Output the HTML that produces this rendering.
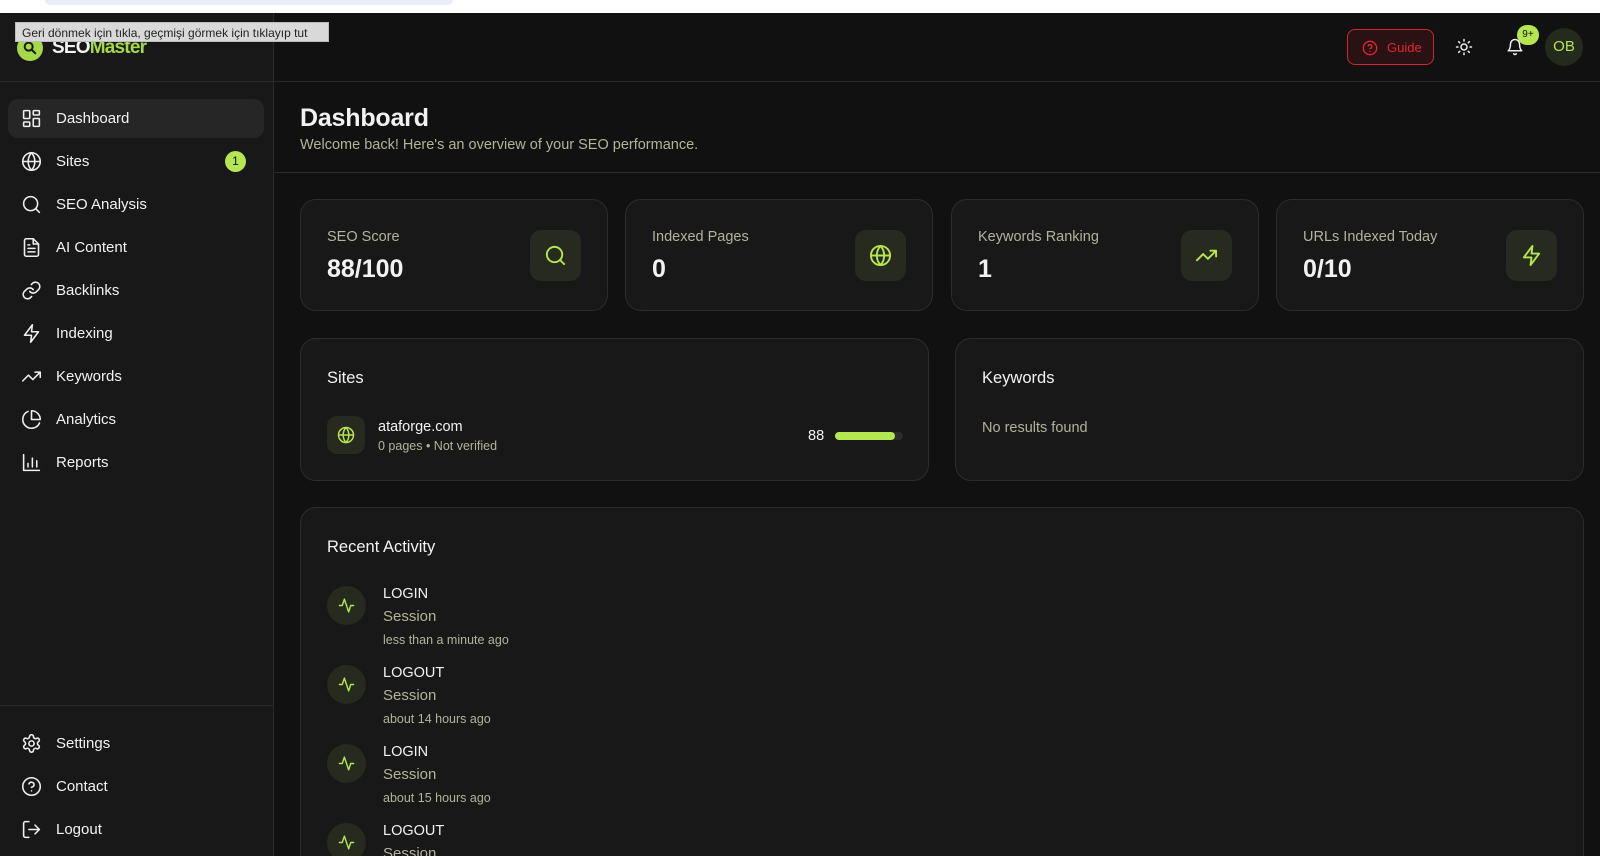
<!DOCTYPE html>
<html style="overflow:hidden;height:856px"><head><meta charset="utf-8">
<style>
*{box-sizing:border-box;margin:0;padding:0}
html,body{overflow:hidden}
body{width:1600px;height:856px;background:#111;font-family:"Liberation Sans",sans-serif;color:#f2f2f2;position:relative}
.top{position:absolute;left:0;top:0;width:1600px;height:13px;background:#fff}
.top .bar{position:absolute;left:45px;top:0;width:408px;height:5px;background:#e9edf6;border-radius:0 0 6px 6px}
.side{position:absolute;left:0;top:13px;width:274px;height:843px;background:#181818;border-right:1px solid #2a2a2a}
.side .hdr{height:69px;border-bottom:1px solid #2a2a2a;position:relative}
.logo{position:absolute;left:17px;top:22px;width:26px;height:26px;border-radius:50%;background:#a6d94a}
.logotxt{position:absolute;left:52px;top:24px;font-size:19px;font-weight:bold;letter-spacing:-0.8px}
.logotxt span{color:#a6d94a}
.nav{position:absolute;left:8px;width:256px;height:39px;border-radius:10px;font-size:15px}
.nav.act{background:#262626}
.nav svg{position:absolute;left:13px;top:9px;width:21px;height:21px;fill:none;stroke:#eee;stroke-width:1.8;stroke-linecap:round;stroke-linejoin:round}
.nav .t{position:absolute;left:48px;top:11px}
.badge{position:absolute;right:18px;top:9px;width:21px;height:21px;border-radius:50%;background:#b5e550;color:#111;font-size:12px;text-align:center;line-height:21px}
.sdiv{position:absolute;left:0;top:705px;width:273px;border-top:1px solid #2a2a2a}
.tip{position:absolute;left:15px;top:22px;width:314px;height:20px;background:#d9d9d9;color:#222;font-size:12px;line-height:20px;padding-left:6px;border:1px solid #bbb}
.mhdr{position:absolute;left:274px;top:13px;width:1326px;height:69px;border-bottom:1px solid #2a2a2a}
.guide{position:absolute;left:1347px;top:29px;width:87px;height:36px;border:1px solid #d0262f;border-radius:8px;background:#2a1214;color:#e3262f;font-size:13px}
.guide svg{position:absolute;left:14px;top:10px}
.guide span{position:absolute;left:39px;top:10px}
.nbadge{position:absolute;left:1517px;top:25px;width:22px;height:20px;border-radius:10px;background:#b5e550;color:#111;font-size:10px;text-align:center;line-height:20px}
.av{position:absolute;left:1545px;top:28px;width:38px;height:38px;border-radius:50%;background:#242a1c;color:#b5e550;font-size:15px;text-align:center;line-height:38px}
h1{position:absolute;left:300px;top:104px;font-size:25px;font-weight:bold;letter-spacing:-0.2px}
.sub{position:absolute;left:300px;top:137px;font-size:14.5px;color:#b3b39c}
.cdiv{position:absolute;left:274px;top:172px;width:1326px;border-top:1px solid #2a2a2a}
.card{position:absolute;background:#181818;border:1px solid #2c2c2c;border-radius:16px}
.lbl{position:absolute;left:26px;top:29px;font-size:14.5px;color:#b3b39c}
.val{position:absolute;left:26px;top:55px;font-size:25px;font-weight:bold}
.ib{position:absolute;right:26px;top:30px;width:51px;height:51px;border-radius:11px;background:#272b1f}
.ib svg{position:absolute;left:14px;top:14px;width:23px;height:23px;fill:none;stroke:#b5e550;stroke-width:2;stroke-linecap:round;stroke-linejoin:round}
.ct{position:absolute;left:26px;font-size:16.5px}
.ai{position:absolute;left:26px;width:39px;height:39px;border-radius:50%;background:#262a1f}
.ai svg{position:absolute;left:11px;top:11px;width:17px;height:17px;fill:none;stroke:#b5e550;stroke-width:2;stroke-linecap:round;stroke-linejoin:round}
.an{position:absolute;left:82px;font-size:14.5px}
.as{position:absolute;left:82px;font-size:15px;color:#b3b39c}
.at{position:absolute;left:82px;font-size:12.5px;color:#b3b39c}
</style></head><body>
<div class="top"><div class="bar"></div></div>
<div class="side">
 <div class="hdr"><div class="logo"><svg style="position:absolute;left:5px;top:5px" width="16" height="16" viewBox="0 0 24 24" fill="none" stroke="#1a1a1a" stroke-width="3" stroke-linecap="round"><circle cx="10" cy="10" r="6"/><path d="M15 15l5 5"/></svg></div><div class="logotxt">SEO<span>Master</span></div></div>
</div>
<div class="tip">Geri dönmek için tıkla, geçmişi görmek için tıklayıp tut</div>

<div class="nav act" style="top:99px"><svg viewBox="0 0 24 24"><rect x="3" y="3" width="7" height="9" rx="1"/><rect x="14" y="3" width="7" height="5" rx="1"/><rect x="14" y="12" width="7" height="9" rx="1"/><rect x="3" y="16" width="7" height="5" rx="1"/></svg><span class="t">Dashboard</span></div>
<div class="nav" style="top:142px"><svg viewBox="0 0 24 24"><circle cx="12" cy="12" r="10"/><path d="M2 12h20M12 2a15 15 0 0 1 0 20a15 15 0 0 1 0-20"/></svg><span class="t">Sites</span><span class="badge">1</span></div>
<div class="nav" style="top:185px"><svg viewBox="0 0 24 24"><circle cx="11" cy="11" r="8"/><path d="M21 21l-4.3-4.3"/></svg><span class="t">SEO Analysis</span></div>
<div class="nav" style="top:228px"><svg viewBox="0 0 24 24"><path d="M14 2H6a2 2 0 0 0-2 2v16a2 2 0 0 0 2 2h12a2 2 0 0 0 2-2V8z"/><path d="M14 2v6h6M16 13H8M16 17H8M10 9H8"/></svg><span class="t">AI Content</span></div>
<div class="nav" style="top:271px"><svg viewBox="0 0 24 24"><path d="M10 13a5 5 0 0 0 7.5.5l3-3a5 5 0 0 0-7-7l-1.7 1.7"/><path d="M14 11a5 5 0 0 0-7.5-.5l-3 3a5 5 0 0 0 7 7l1.7-1.7"/></svg><span class="t">Backlinks</span></div>
<div class="nav" style="top:314px"><svg viewBox="0 0 24 24"><path d="M13 2L4 14h8l-1 8 9-12h-8z"/></svg><span class="t">Indexing</span></div>
<div class="nav" style="top:357px"><svg viewBox="0 0 24 24"><path d="M22 7l-8.5 8.5-5-5L2 17M16 7h6v6"/></svg><span class="t">Keywords</span></div>
<div class="nav" style="top:400px"><svg viewBox="0 0 24 24"><path d="M21.2 15.9A10 10 0 1 1 8 2.8"/><path d="M22 12A10 10 0 0 0 12 2v10z"/></svg><span class="t">Analytics</span></div>
<div class="nav" style="top:443px"><svg viewBox="0 0 24 24"><path d="M3 3v18h18M8 17v-4M13 17V7M18 17v-7"/></svg><span class="t">Reports</span></div>
<div class="sdiv"></div>
<div class="nav" style="top:724px"><svg viewBox="0 0 24 24"><circle cx="12" cy="12" r="3"/><path d="M12.2 2h-.4a2 2 0 0 0-2 2v.2a2 2 0 0 1-1 1.7l-.4.3a2 2 0 0 1-2 0l-.2-.1a2 2 0 0 0-2.7.7l-.2.4a2 2 0 0 0 .7 2.7l.2.1a2 2 0 0 1 1 1.7v.5a2 2 0 0 1-1 1.7l-.2.1a2 2 0 0 0-.7 2.7l.2.4a2 2 0 0 0 2.7.7l.2-.1a2 2 0 0 1 2 0l.4.3a2 2 0 0 1 1 1.7v.2a2 2 0 0 0 2 2h.4a2 2 0 0 0 2-2v-.2a2 2 0 0 1 1-1.7l.4-.3a2 2 0 0 1 2 0l.2.1a2 2 0 0 0 2.7-.7l.2-.4a2 2 0 0 0-.7-2.7l-.2-.1a2 2 0 0 1-1-1.7v-.5a2 2 0 0 1 1-1.7l.2-.1a2 2 0 0 0 .7-2.7l-.2-.4a2 2 0 0 0-2.7-.7l-.2.1a2 2 0 0 1-2 0l-.4-.3a2 2 0 0 1-1-1.7V4a2 2 0 0 0-2-2z"/></svg><span class="t">Settings</span></div>
<div class="nav" style="top:767px"><svg viewBox="0 0 24 24"><circle cx="12" cy="12" r="10"/><path d="M9.1 9a3 3 0 0 1 5.8 1c0 2-3 3-3 3M12 17h.01"/></svg><span class="t">Contact</span></div>
<div class="nav" style="top:810px"><svg viewBox="0 0 24 24"><path d="M9 21H5a2 2 0 0 1-2-2V5a2 2 0 0 1 2-2h4M16 17l5-5-5-5M21 12H9"/></svg><span class="t">Logout</span></div>

<div class="mhdr"></div>
<div class="guide"><svg width="16" height="16" viewBox="0 0 24 24" fill="none" stroke="#e3262f" stroke-width="2" stroke-linecap="round"><circle cx="12" cy="12" r="10"/><path d="M9.1 9a3 3 0 0 1 5.8 1c0 2-3 3-3 3M12 17h.01"/></svg><span>Guide</span></div>
<svg style="position:absolute;left:1455px;top:38px" width="18" height="18" viewBox="0 0 24 24" fill="none" stroke="#eee" stroke-width="2" stroke-linecap="round"><circle cx="12" cy="12" r="4"/><path d="M12 2v2M12 20v2M4.9 4.9l1.4 1.4M17.7 17.7l1.4 1.4M2 12h2M20 12h2M6.3 17.7l-1.4 1.4M19.1 4.9l-1.4 1.4"/></svg>
<svg style="position:absolute;left:1506px;top:38px" width="18" height="18" viewBox="0 0 24 24" fill="none" stroke="#eee" stroke-width="2" stroke-linecap="round" stroke-linejoin="round"><path d="M6 8a6 6 0 0 1 12 0c0 7 3 9 3 9H3s3-2 3-9M10.3 21a1.9 1.9 0 0 0 3.4 0"/></svg>
<div class="nbadge">9+</div>
<div class="av">OB</div>

<h1>Dashboard</h1>
<div class="sub">Welcome back! Here's an overview of your SEO performance.</div>
<div class="cdiv"></div>

<div class="card" style="left:300px;top:199px;width:308px;height:112px"><div class="lbl">SEO Score</div><div class="val">88/100</div><div class="ib"><svg viewBox="0 0 24 24"><circle cx="11" cy="11" r="8"/><path d="M21 21l-4.3-4.3"/></svg></div></div>
<div class="card" style="left:625px;top:199px;width:308px;height:112px"><div class="lbl">Indexed Pages</div><div class="val">0</div><div class="ib"><svg viewBox="0 0 24 24"><circle cx="12" cy="12" r="10"/><path d="M2 12h20M12 2a15 15 0 0 1 0 20a15 15 0 0 1 0-20"/></svg></div></div>
<div class="card" style="left:951px;top:199px;width:308px;height:112px"><div class="lbl">Keywords Ranking</div><div class="val">1</div><div class="ib"><svg viewBox="0 0 24 24"><path d="M22 7l-8.5 8.5-5-5L2 17M16 7h6v6"/></svg></div></div>
<div class="card" style="left:1276px;top:199px;width:308px;height:112px"><div class="lbl">URLs Indexed Today</div><div class="val">0/10</div><div class="ib"><svg viewBox="0 0 24 24"><path d="M13 2L4 14h8l-1 8 9-12h-8z"/></svg></div></div>

<div class="card" style="left:300px;top:338px;width:629px;height:143px">
 <div class="ct" style="top:30px">Sites</div>
 <div style="position:absolute;left:26px;top:77px;width:38px;height:38px;border-radius:10px;background:#262a1f"><svg style="position:absolute;left:10px;top:10px" width="18" height="18" viewBox="0 0 24 24" fill="none" stroke="#b5e550" stroke-width="2"><circle cx="12" cy="12" r="10"/><path d="M2 12h20M12 2a15 15 0 0 1 0 20a15 15 0 0 1 0-20"/></svg></div>
 <div style="position:absolute;left:77px;top:80px;font-size:14.5px">ataforge.com</div>
 <div style="position:absolute;left:77px;top:100px;font-size:12.5px;color:#b3b39c">0 pages • Not verified</div>
 <div style="position:absolute;left:507px;top:89px;font-size:14.5px">88</div>
 <div style="position:absolute;left:534px;top:93px;width:68px;height:8px;border-radius:4px;background:#2c2c2c"><div style="width:60px;height:8px;border-radius:4px;background:#b5e550"></div></div>
</div>
<div class="card" style="left:955px;top:338px;width:629px;height:143px">
 <div class="ct" style="top:30px">Keywords</div>
 <div style="position:absolute;left:26px;top:81px;font-size:14.5px;color:#b3b39c">No results found</div>
</div>

<div class="card" style="left:300px;top:507px;width:1284px;height:380px;overflow:hidden">
 <div class="ct" style="top:30px">Recent Activity</div>
 <div class="ai" style="top:78px"><svg viewBox="0 0 24 24"><path d="M22 12h-4l-3 9L9 3l-3 9H2"/></svg></div>
 <div class="an" style="top:78px">LOGIN</div><div class="as" style="top:100px">Session</div><div class="at" style="top:125px">less than a minute ago</div>
 <div class="ai" style="top:157px"><svg viewBox="0 0 24 24"><path d="M22 12h-4l-3 9L9 3l-3 9H2"/></svg></div>
 <div class="an" style="top:157px">LOGOUT</div><div class="as" style="top:179px">Session</div><div class="at" style="top:204px">about 14 hours ago</div>
 <div class="ai" style="top:236px"><svg viewBox="0 0 24 24"><path d="M22 12h-4l-3 9L9 3l-3 9H2"/></svg></div>
 <div class="an" style="top:236px">LOGIN</div><div class="as" style="top:258px">Session</div><div class="at" style="top:283px">about 15 hours ago</div>
 <div class="ai" style="top:315px"><svg viewBox="0 0 24 24"><path d="M22 12h-4l-3 9L9 3l-3 9H2"/></svg></div>
 <div class="an" style="top:315px">LOGOUT</div><div class="as" style="top:337px">Session</div>
</div>
</body></html>
